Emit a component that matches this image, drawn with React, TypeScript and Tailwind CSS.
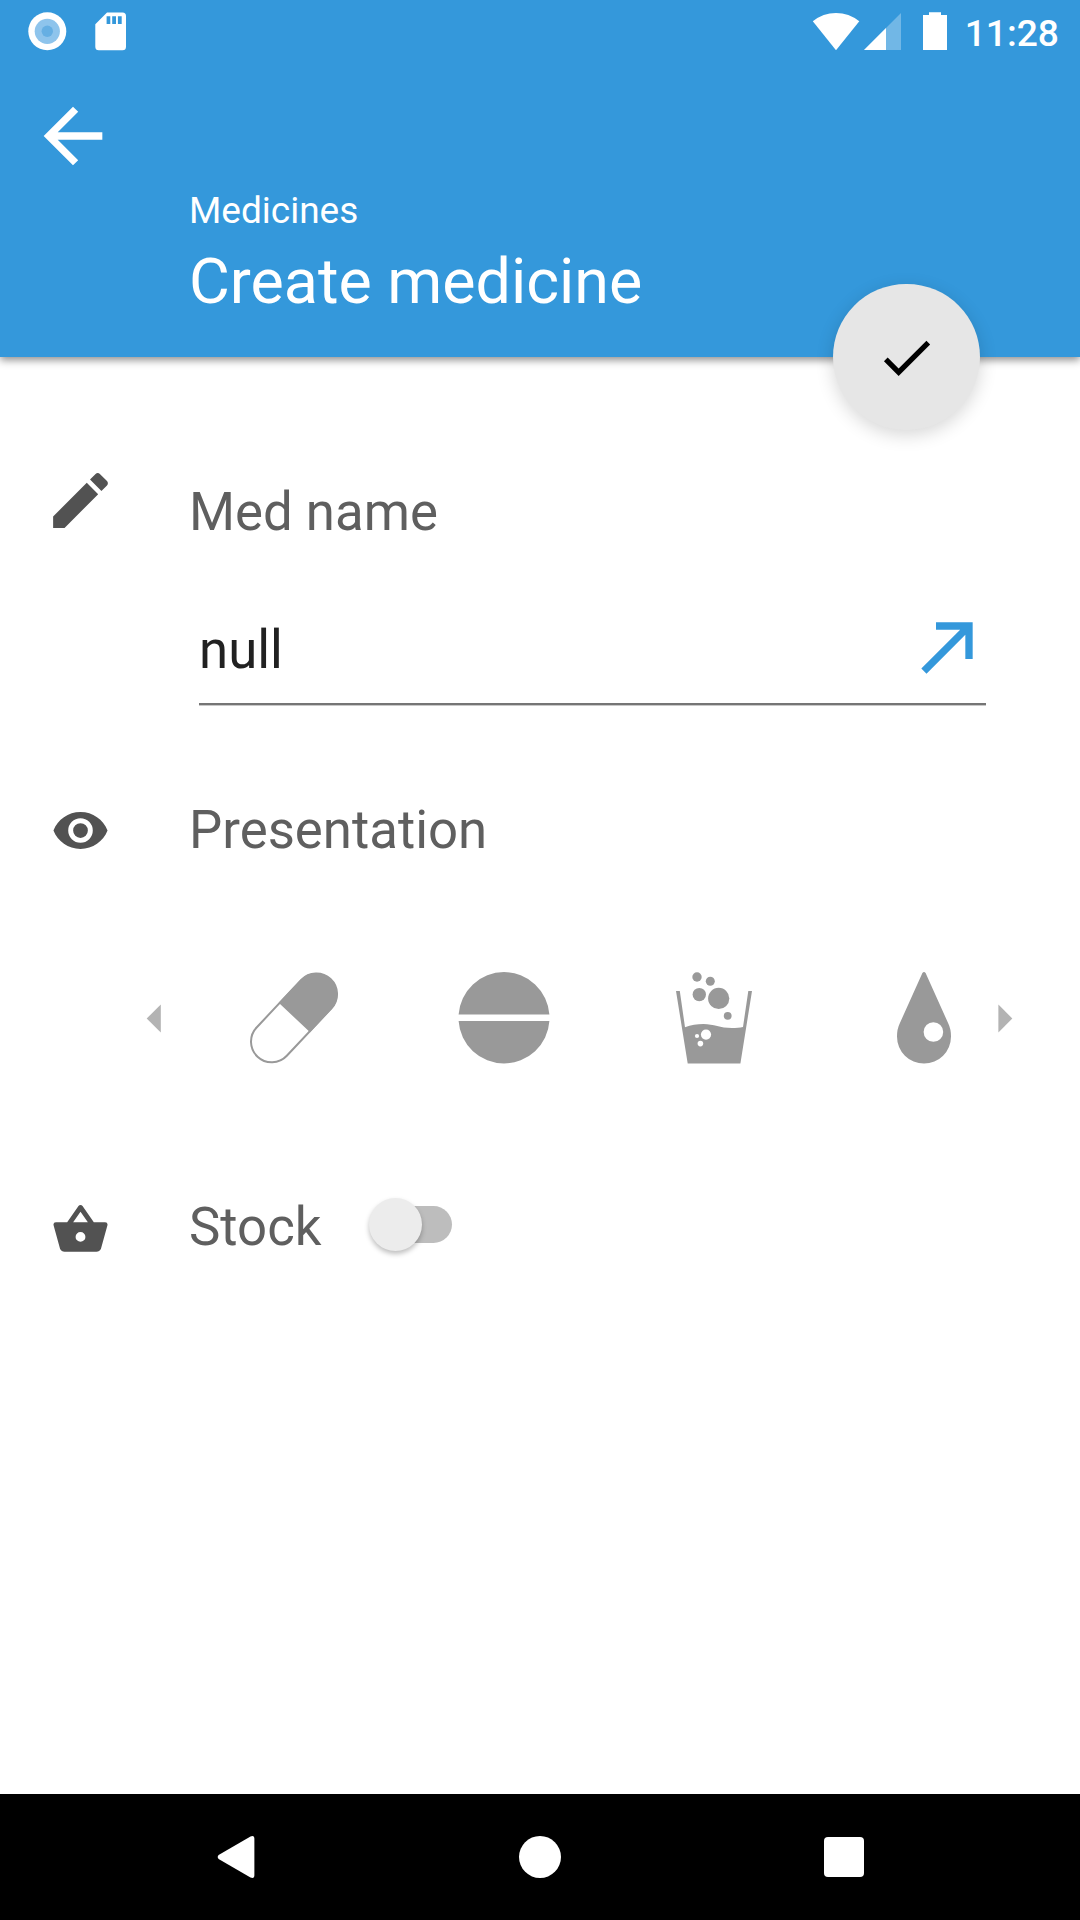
import type { ReactNode } from "react";

function StatusBar() {
  return (
    <div className="flex h-[63px] items-start justify-between pl-7 pr-[21px] pt-3">
      <div className="flex gap-[28px]">
        <svg className="h-[39px] w-[39px]" viewBox="0 0 39 39">
          <circle cx="19.3" cy="19.3" r="19" fill="#fff" />
          <circle cx="19.3" cy="19.3" r="12.6" fill="#8ec4ec" />
          <circle cx="19.3" cy="19.3" r="5.7" fill="#66afe3" />
        </svg>
        <svg className="h-[39px] w-8" viewBox="95 12 32 39">
          <path
            fill="#fff"
            fillRule="evenodd"
            d="M107 12.5H122.5Q126 12.5 126 16V46.8Q126 50.3 122.5 50.3H98.8Q95.3 50.3 95.3 46.8V24.2ZM106.6 16.2V24H110.3V16.2ZM112.2 16.2V24H116V16.2ZM117.9 16.2V24H121.7V16.2Z"
          />
        </svg>
      </div>
      <div className="flex">
        <svg className="h-[39px] w-[136px]" viewBox="811 12 136 39" fill="#fff">
          <path d="M811.8 21.3Q822 13 835 13T858.3 21.3L835 50.2Z" />
          <path d="M900 13V50H863Z" opacity=".3" />
          <path d="M885 28V50H863Z" />
          <path d="M928 12.3H940V15H946V50H922V15H928Z" />
        </svg>
        <span className="ml-[17px] text-[37.2px] font-medium leading-[43px]">11:28</span>
      </div>
    </div>
  );
}

function Header() {
  return (
    <header className="relative flex h-[357px] flex-col bg-[#3498db] text-white shadow-[0_3px_8px_rgba(0,0,0,0.45)]">
      <StatusBar />
      <button className="ml-[29px] mt-[29px] h-[88px] w-[88px]" aria-label="Back">
        <svg className="h-[88px] w-[88px]" viewBox="0 0 24 24" fill="currentColor">
          <path d="M20 11H7.83l5.59-5.59L12 4l-8 8 8 8 1.41-1.41L7.83 13H20v-2z" />
        </svg>
      </button>
      <p className="ml-[189px] mt-[9px] text-[37px] leading-[44px]">Medicines</p>
      <h1 className="ml-[189px] mt-[12px] text-[62.75px] leading-[74px]">Create medicine</h1>
      <button
        className="absolute left-[833px] top-[284px] flex h-[146px] w-[147px] items-center justify-center rounded-full bg-[#e6e6e6] text-black shadow-[0_5px_18px_rgba(0,0,0,0.16)]"
        aria-label="Save"
      >
        <svg className="h-[63px] w-[63px]" viewBox="0 0 24 24" fill="currentColor">
          <path d="M9 16.17L4.83 12l-1.42 1.41L9 19 21 7l-1.41-1.41z" />
        </svg>
      </button>
    </header>
  );
}

function Section({ icon, title, children }: { icon: ReactNode; title: string; children?: ReactNode }) {
  return (
    <div className="flex h-[62px] items-center">
      <div className="flex w-[189px] items-center pl-[44px]">
        <div className="flex w-[74px] justify-center">{icon}</div>
      </div>
      <h2 className="text-[52.75px] leading-[62px] text-[#5f5f5f]">{title}</h2>
      {children}
    </div>
  );
}

const iconColor = "#525252";

function PencilIcon() {
  return (
    <svg className="-ml-px -mt-[23px] h-[73px] w-[73px] shrink-0" viewBox="0 0 24 24" fill={iconColor}>
      <path d="M3 17.25V21h3.75L17.81 9.94l-3.75-3.75L3 17.25zM20.71 7.04c.39-.39.39-1.02 0-1.41l-2.34-2.34c-.39-.39-1.02-.39-1.41 0l-1.83 1.83 3.75 3.75 1.83-1.83z" />
    </svg>
  );
}

function EyeIcon() {
  return (
    <svg className="-ml-px mt-[1px] h-[59px] w-[59px]" viewBox="0 0 24 24" fill={iconColor}>
      <path d="M12,9A3,3 0 0,0 9,12A3,3 0 0,0 12,15A3,3 0 0,0 15,12A3,3 0 0,0 12,9M12,17A5,5 0 0,1 7,12A5,5 0 0,1 12,7A5,5 0 0,1 17,12A5,5 0 0,1 12,17M12,4.5C7,4.5 2.73,7.61 1,12C2.73,16.39 7,19.5 12,19.5C17,19.5 21.27,16.39 23,12C21.27,7.61 17,4.5 12,4.5Z" />
    </svg>
  );
}

function BasketIcon() {
  return (
    <svg className="-ml-px mt-[4px] h-[59px] w-[59px]" viewBox="0 0 24 24" fill={iconColor}>
      <path d="M5.5,21C4.72,21 4.04,20.55 3.71,19.9V19.9L1.1,10.44L1,10A1,1 0 0,1 2,9H6.58L11.18,2.43C11.36,2.17 11.66,2 12,2C12.34,2 12.65,2.17 12.83,2.44L17.42,9H22A1,1 0 0,1 23,10L22.96,10.29L20.29,19.9C19.96,20.55 19.28,21 18.5,21H5.5M12,4.74L9,9H15L12,4.74M12,13A2,2 0 0,0 10,15A2,2 0 0,0 12,17A2,2 0 0,0 14,15A2,2 0 0,0 12,13Z" />
    </svg>
  );
}

function PresentationPicker() {
  return (
    <div className="mt-[110px] flex h-[94px] items-center pl-[146px] text-[#999999]">
      <svg className="h-[29px] w-[15px]" viewBox="0 0 15 29" fill="#b3b3b3">
        <path d="M.7 14.5L14.8.6V28.4Z" />
      </svg>
      <svg className="ml-[88px] h-[94px] w-[90px]" viewBox="249 971 90 94" fill="none">
        <g transform="rotate(43.2 294.1 1017.8)">
          <rect x="273.4" y="964.6" width="41.4" height="106.6" rx="20.7" stroke="#999999" strokeWidth="2" />
          <path fill="#999999" d="M272.6 1017.4V986A21.5 21.5 0 0 1 315.6 986V1017.4Z" />
        </g>
      </svg>
      <svg className="ml-[119px] h-[94px] w-[92px]" viewBox="458 971 92 94" fill="currentColor">
        <path d="M458.6 1014.6A45.5 45.5 0 0 1 549.4 1014.6ZM458.6 1021H549.4A45.5 45.5 0 0 1 458.6 1021Z" />
      </svg>
      <svg className="ml-[125px] h-[94px] w-[78px]" viewBox="675 971 78 94" fill="currentColor">
        <path d="M676 991H679.8L685 1027.2C691 1025 697 1024 703.5 1024C714 1024 720 1028 732 1028C736 1028 740 1027.7 743 1027L748.3 991H752L740.4 1063.6H687.7Z" />
        <circle cx="697" cy="977" r="4.7" />
        <circle cx="710.3" cy="981.3" r="4.5" />
        <circle cx="699.3" cy="994.6" r="6.7" />
        <circle cx="718.7" cy="998.4" r="10.6" />
        <circle cx="727.7" cy="1015.8" r="3.9" />
        <g fill="#fff">
          <circle cx="706" cy="1034.6" r="5.1" />
          <circle cx="697" cy="1036" r="2.1" />
          <circle cx="700.4" cy="1043.6" r="2.8" />
        </g>
      </svg>
      <svg className="ml-[143px] h-[94px] w-14" viewBox="896 971 56 94" fill="currentColor">
        <path d="M922.4 973Q924 970.8 925.6 973L948.3 1023.5Q951 1029 951 1036.6A27 27 0 0 1 897 1036.6Q897 1029 899.7 1023.5Z" />
        <circle cx="933.4" cy="1032" r="9.8" fill="#fff" />
      </svg>
      <svg className="ml-[46px] h-[29px] w-[15px]" viewBox="0 0 15 29" fill="#b3b3b3">
        <path d="M14.3 14.5L.4.6V28.4Z" />
      </svg>
    </div>
  );
}

function NavBar() {
  return (
    <nav className="flex h-[126px] items-center bg-black pl-[217px]">
      <svg className="h-[44px] w-[38px]" viewBox="217 1835 38 44" fill="#fff">
        <path d="M218.6 1855L250.5 1836.5Q254.4 1834.8 254.4 1839V1875Q254.4 1879.2 250.5 1877.5L218.6 1859Q216.8 1857 218.6 1855Z" />
      </svg>
      <div className="ml-[264px] h-[42px] w-[42px] rounded-full bg-white" />
      <div className="ml-[263px] h-10 w-10 rounded-[4px] bg-white" />
    </nav>
  );
}

export default function App() {
  return (
    <div className="flex h-[1920px] w-[1080px] flex-col overflow-hidden bg-white font-['Roboto',sans-serif]">
      <Header />
      <main className="flex-1 pt-[124px]">
        <Section icon={<PencilIcon />} title="Med name" />
        <div className="ml-[199px] mt-[60px] flex h-[102px] w-[787px] justify-between border-b-2 border-[#757575] shadow-[0_1px_0_#c8c8c8]">
          <span className="mt-[16px] text-[52.75px] leading-[62px] text-[#212121]">null</span>
          <svg className="-mr-[5px] mt-[1px] h-[88px] w-[88px]" viewBox="0 0 24 24" fill="#3498db">
            <path d="M5,17.59L15.59,7H9V5H19V15H17V8.41L6.41,19L5,17.59Z" />
          </svg>
        </div>
        <div className="mt-[94px]">
          <Section icon={<EyeIcon />} title="Presentation" />
        </div>
        <PresentationPicker />
        <div className="mt-[131px]">
          <Section icon={<BasketIcon />} title="Stock">
            <div className="ml-[58px] mt-[-5px] flex h-[37px] w-[72px] items-center rounded-full bg-[#bdbdbd]">
              <div className="-ml-[11px] h-[53px] w-[53px] rounded-full bg-[#ececec] shadow-[0_3px_5px_rgba(0,0,0,0.25)]" />
            </div>
          </Section>
        </div>
      </main>
      <NavBar />
    </div>
  );
}
